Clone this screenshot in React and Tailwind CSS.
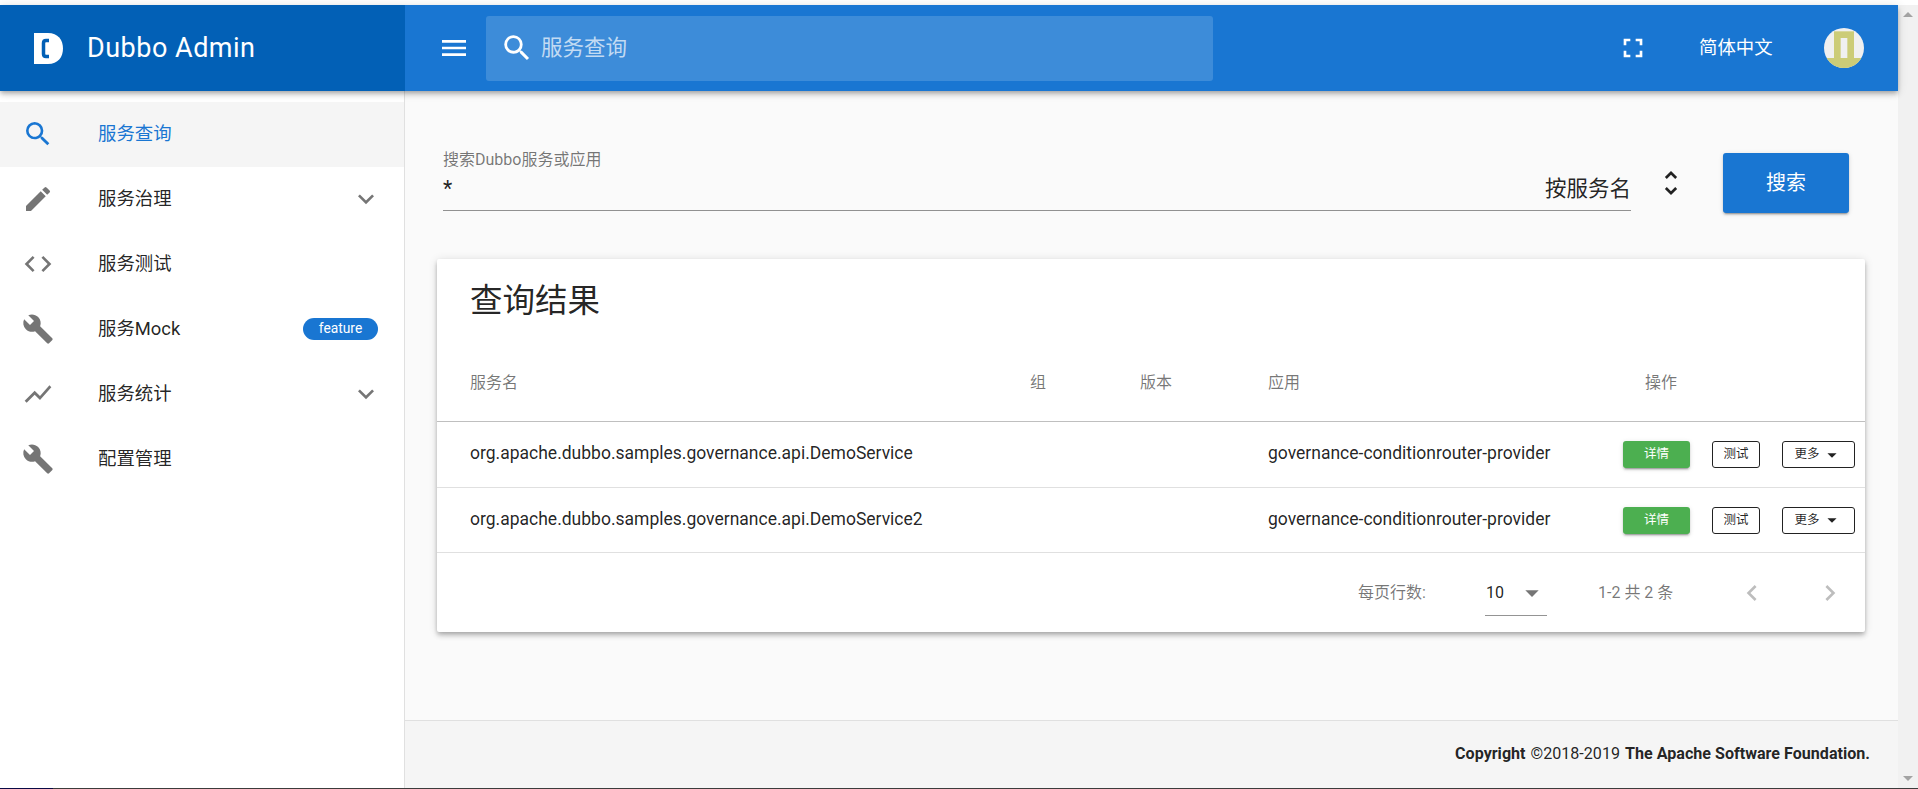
import React from 'react';
import {
  MdSearch, MdEdit, MdCode, MdBuild, MdShowChart, MdKeyboardArrowDown, MdMenu,
  MdFullscreen, MdUnfoldMore, MdArrowDropDown, MdChevronLeft, MdChevronRight,
} from 'react-icons/md';

const FONT = 'font-[Roboto,"Noto_Sans_CJK_SC",sans-serif]';
const BAR_SHADOW = 'shadow-[0_2px_4px_-1px_rgba(0,0,0,0.2),0_4px_5px_0_rgba(0,0,0,0.14),0_1px_10px_0_rgba(0,0,0,0.12)]';
const BTN_SHADOW = 'shadow-[0_3px_1px_-2px_rgba(0,0,0,0.2),0_2px_2px_0_rgba(0,0,0,0.14),0_1px_5px_0_rgba(0,0,0,0.12)]';

const MENU = [
  { icon: MdSearch, label: '服务查询', active: true },
  { icon: MdEdit, label: '服务治理', arrow: true },
  { icon: MdCode, label: '服务测试' },
  { icon: MdBuild, label: '服务Mock', badge: 'feature' },
  { icon: MdShowChart, label: '服务统计', arrow: true },
  { icon: MdBuild, label: '配置管理' },
];

const ROWS = [
  { name: 'org.apache.dubbo.samples.governance.api.DemoService', height: 'h-[66px]' },
  { name: 'org.apache.dubbo.samples.governance.api.DemoService2', height: 'h-[65px]' },
];

const COLS = 'grid grid-cols-[560px_110px_128px_355px_1fr] items-center pl-[33px]';

function Logo() {
  return (
    <svg width="29" height="31" viewBox="0 0 29 31">
      <path d="M0 0H14C24 0 29 7 29 15.5C29 24 24 31 14 31H0Z" fill="#fff" />
      <path d="M15 7.5H12Q9.5 7.5 9.5 10V21Q9.5 23.5 12 23.5H15" fill="none" stroke="#0260b6" strokeWidth="3.5" />
    </svg>
  );
}

function Avatar() {
  return (
    <svg width="40" height="40" viewBox="0 0 120 120" className="rounded-full">
      <rect width="120" height="120" fill="#f0f0f0" />
      <rect x="30" y="10" width="60" height="80" fill="#cccc77" />
      <rect x="50" y="30" width="20" height="60" fill="#f0f0f0" />
      <rect y="90" width="120" height="30" fill="#cccc77" />
    </svg>
  );
}

function Header() {
  return (
    <header className={`relative z-10 flex h-[86px] shrink-0 items-center bg-[#1976d2] text-white ${BAR_SHADOW}`}>
      <div className="flex h-full w-[405px] shrink-0 items-center bg-[#0260b6] pl-[34px]">
        <Logo />
        <span className="ml-[24px] text-[27px] leading-none tracking-[0.5px]">Dubbo Admin</span>
      </div>
      <MdMenu className="ml-[33px] size-[32px] shrink-0" />
      <div className="ml-[16px] flex h-[65px] w-[727px] items-center rounded-[3px] bg-white/[0.16] pl-[14px]">
        <MdSearch className="size-[34px]" />
        <span className="ml-[7px] text-[21.5px] leading-none text-white/70">服务查询</span>
      </div>
      <MdFullscreen className="ml-[404px] size-[32px] shrink-0" />
      <span className="ml-[50px] text-[18.4px]">简体中文</span>
      <div className="ml-[51px] shrink-0"><Avatar /></div>
    </header>
  );
}

function Sidebar() {
  return (
    <aside className="w-[405px] shrink-0 border-r border-[#e0e0e0] bg-white pt-[11px]">
      {MENU.map((item) => (
        <div key={item.label} className={`flex h-[65px] items-center pb-[2px] pl-[22px] pr-[26px] ${item.active ? 'bg-[#f5f5f5] text-[#1976d2]' : 'text-black/87'}`}>
          <item.icon className={`size-[32px] shrink-0 ${item.active ? '' : 'text-black/54'}`} />
          <span className="ml-[44px] flex-1 text-[18.4px]">{item.label}</span>
          {item.arrow && <MdKeyboardArrowDown className="mr-[-4px] size-[32px] text-black/54" />}
          {item.badge && (
            <span className="flex h-[22px] w-[75px] items-center justify-center rounded-full bg-[#1976d2] text-[13.8px] text-white">{item.badge}</span>
          )}
        </div>
      ))}
    </aside>
  );
}

function SearchForm() {
  return (
    <div className="flex items-start pl-[38px] pt-[59px]">
      <div className="h-[61px] w-[1188px] shrink-0 border-b border-black/42">
        <div className="text-[16px] leading-[20px] text-black/54">搜索Dubbo服务或应用</div>
        <div className="flex items-center justify-between pt-[2px] text-[21.5px] leading-[34px] text-black/87">
          <span>*</span>
          <span>按服务名</span>
        </div>
      </div>
      <MdUnfoldMore className="ml-[24px] mt-[17px] size-[32px] shrink-0 text-black/87" />
      <button className={`ml-[36px] mt-[3px] h-[60px] w-[126px] rounded-[3px] bg-[#1976d2] text-[20px] text-white ${BTN_SHADOW}`}>搜索</button>
    </div>
  );
}

function Row({ name, height }) {
  return (
    <div className={`${COLS} ${height} border-b border-black/12 text-[17.5px] text-black/87`}>
      <span className="pb-[2px]">{name}</span>
      <span />
      <span />
      <span className="whitespace-nowrap pb-[2px]">governance-conditionrouter-provider</span>
      <div className="flex items-center text-[12.5px]">
        <button className={`h-[27px] w-[67px] rounded-[3px] bg-[#4caf50] text-white ${BTN_SHADOW}`}>详情</button>
        <button className="ml-[22px] h-[27px] w-[48px] rounded-[3px] border border-[#222]">测试</button>
        <button className="ml-[22px] flex h-[27px] w-[73px] items-center justify-center rounded-[3px] border border-[#222]">
          更多<MdArrowDropDown className="ml-[1px] size-[22px]" />
        </button>
      </div>
    </div>
  );
}

function ResultCard() {
  return (
    <section className={`ml-[32px] mt-[46px] h-[373px] w-[1428px] rounded-[2px] bg-white ${BAR_SHADOW}`}>
      <h2 className="pl-[33px] pt-[20px] text-[32.5px] font-normal leading-[44px] text-black/87">查询结果</h2>
      <div className={`${COLS} mt-[21px] h-[78px] border-b border-black/25 text-[16px] text-black/54`}>
        <span>服务名</span>
        <span>组</span>
        <span>版本</span>
        <span>应用</span>
        <span className="pl-[22px]">操作</span>
      </div>
      {ROWS.map((row) => <Row key={row.name} name={row.name} height={row.height} />)}
      <div className="flex h-[79px] items-center text-[16px] text-black/54">
        <span className="ml-[921px] w-[68px]">每页行数:</span>
        <div className="ml-[59px] flex h-[46px] w-[62px] items-center justify-between border-b border-black/42 pt-[2px] pl-px">
          <span className="text-black/87">10</span>
          <MdArrowDropDown className="mr-[-1px] size-[32px]" />
        </div>
        <span className="ml-[51px] whitespace-nowrap">1-2 共 2 条</span>
        <MdChevronLeft className="ml-[63px] size-[32px] shrink-0 text-black/26" />
        <MdChevronRight className="ml-[46px] size-[32px] shrink-0 text-black/26" />
      </div>
    </section>
  );
}

function Scrollbar() {
  return (
    <div className="flex w-[20px] shrink-0 flex-col items-center justify-between bg-[#f1f1f1] py-[7px]">
      <div className="size-0 border-x-[5px] border-b-[5px] border-x-transparent border-b-[#a3a3a3]" />
      <div className="size-0 border-x-[5px] border-t-[5px] border-x-transparent border-t-[#a3a3a3]" />
    </div>
  );
}

export default function App() {
  return (
    <div className={`flex h-[789px] flex-col overflow-hidden bg-white ${FONT}`}>
      <div className="flex min-h-0 flex-1 pt-[5px]">
        <div className="flex min-w-0 flex-1 flex-col">
          <Header />
          <div className="flex min-h-0 flex-1">
            <Sidebar />
            <main className="flex min-w-0 flex-1 flex-col bg-[#fafafa]">
              <div className="flex-1">
                <SearchForm />
                <ResultCard />
              </div>
              <footer className="flex h-[68px] items-center justify-end border-t border-[#e0e0e0] bg-[#f5f5f5] pr-[28px] text-[16.1px] text-black/87">
                <strong className="font-bold">Copyright</strong>
                <span className="ml-[5px]">©2018-2019</span>
                <strong className="ml-[5px] font-bold">The Apache Software Foundation.</strong>
              </footer>
            </main>
          </div>
        </div>
        <Scrollbar />
      </div>
      <div className="flex h-px shrink-0 bg-[#3c3c3c]">
        <div className="h-px w-[53px] bg-[#0a0a45]" />
      </div>
    </div>
  );
}
